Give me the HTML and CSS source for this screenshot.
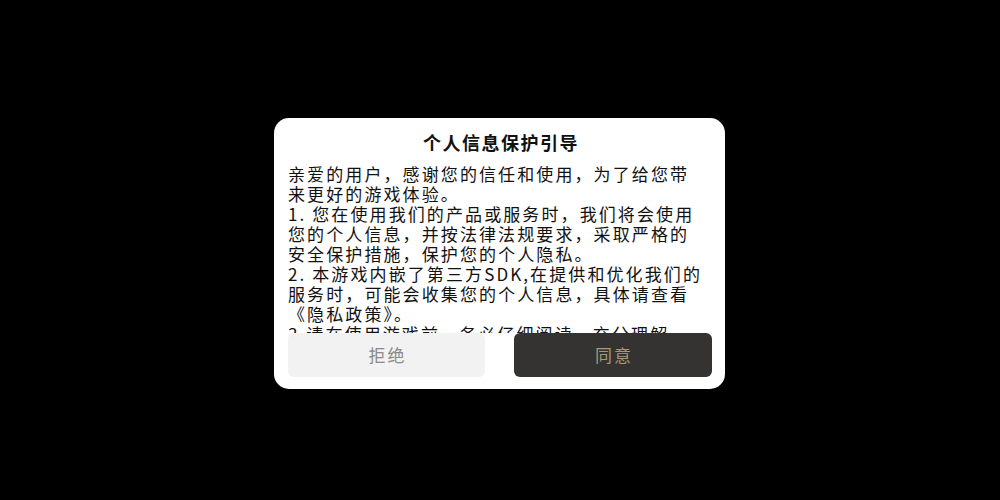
FILE: index.html
```html
<!DOCTYPE html>
<html lang="zh">
<head>
<meta charset="utf-8">
<title>个人信息保护引导</title>
<link rel="stylesheet" href="styles.css">
</head>
<body>
<div class="dialog">
  <div class="title">个人信息保护引导</div>
  <div class="content">
    <p>亲爱的用户，感谢您的信任和使用，为了给您带来更好的游戏体验。</p>
    <p>1. 您在使用我们的产品或服务时，我们将会使用您的个人信息，并按法律法规要求，采取严格的安全保护措施，保护您的个人隐私。</p>
    <p>2. 本游戏内嵌了第三方SDK,在提供和优化我们的服务时，可能会收集您的个人信息，具体请查看《隐私政策》。</p>
    <p>3.请在使用游戏前，务必仔细阅读，充分理解《用户协议》和《隐私政策》的内容。</p>
  </div>
  <div class="actions">
    <button class="btn btn-reject">拒绝</button>
    <button class="btn btn-agree">同意</button>
  </div>
</div>
</body>
</html>
```
FILE: styles.css
```css
html, body {
  margin: 0;
  padding: 0;
  background: #000;
  height: 100%;
}
body {
  padding-top: 118px;
  box-sizing: border-box;
  font-family: "Noto Sans CJK SC", "Noto Sans", sans-serif;
}
.dialog {
  width: 451px;
  height: 271px;
  margin-left: 274px;
  background: #fff;
  border-radius: 15px;
  box-sizing: border-box;
  padding: 12px 13px 12px 14px;
  display: flex;
  flex-direction: column;
}
.title {
  text-align: center;
  font-size: 18px;
  font-weight: bold;
  letter-spacing: 1.5px;
  line-height: 24px;
  color: #111;
  margin-bottom: 10px;
  padding-left: 2px;
}
.content {
  height: 169px;
  overflow: hidden;
  font-size: 17px;
  line-height: 20px;
  letter-spacing: 2.1px;
  color: #111;
  width: 416px;
}
.content p {
  margin: 0;
}
.actions {
  display: flex;
  justify-content: space-between;
  height: 44px;
}
.btn {
  width: 197px;
  height: 44px;
  border: none;
  border-radius: 6px;
  font-family: "Noto Sans CJK SC", "Noto Sans", sans-serif;
  font-size: 17px;
  letter-spacing: 2px;
  line-height: 44px;
  padding: 0 0 0 2px;
}
.btn-reject {
  background: #f2f2f2;
  color: #8a8a8a;
}
.btn-agree {
  background: #353232;
  color: #a89a74;
  width: 198px;
}
```
